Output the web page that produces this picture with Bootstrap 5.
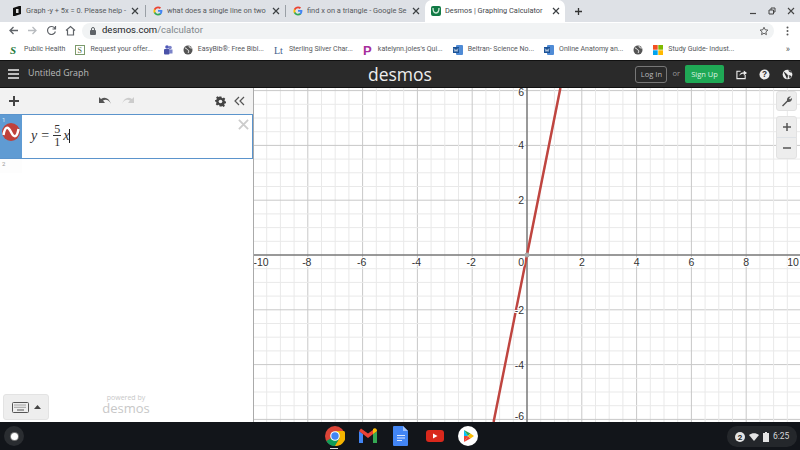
<!DOCTYPE html>
<html lang="en">
<head>
<meta charset="UTF-8">
<meta name="viewport" content="width=device-width, initial-scale=1.0">
<title>Desmos | Graphing Calculator</title>
<link rel="stylesheet" href="https://cdn.jsdelivr.net/npm/bootstrap@5.3.0/dist/css/bootstrap.min.css">
<style>
html, body { width: 800px; height: 450px; overflow: hidden; }
body { font-family: Roboto, "Liberation Sans", sans-serif; background: #fff; color: #3c4043; }
.tabstrip { height: 22px; background: #dee1e6; font-size: 7.4px; }
.chrome-tab { width: 139px; height: 22px; padding: 0 5px 0 7px; gap: 4px; color: #55585c; white-space: nowrap; flex: none; }
.chrome-tab.first-tab { width: 145px; padding: 0 6px 0 12px; }
.chrome-tab.active-tab { background: #fff; border-radius: 7px 7px 0 0; width: 140px; padding-left: 6px; color: #45484c; }
.tab-sep { width: 1px; height: 12px; background: #9aa0a6; flex: none; }
.tab-title { flex: 1; min-width: 0; overflow: hidden; }
.tab-x { width: 8px; flex: none; }
.new-tab { margin-left: 9px; }
.win-btns { gap: 11px; padding-right: 5px; }
.toolbar { height: 17px; background: #fff; padding-left: 4px; }
.toolbar-slot { width: 19px; }
.omni { width: 692px; height: 16px; margin-left: 2px; background: #f1f3f4; border-radius: 8px; padding: 0 5px 0 8px; font-size: 9.5px; color: #80868b; }
.omni b { font-weight: 400; color: #202124; }
.lock-ico { margin-right: 6px; }
.menu-dots { margin-left: 12px; }
.bookmarks { height: 21px; background: #fff; font-size: 7px; padding-left: 9px; color: #55585c; white-space: nowrap; }
.bm { gap: 5px; margin-right: 10px; flex: none; }
.bm-ico { width: 10px; height: 10px; flex: none; }
.more-bm { font-size: 9px; padding-right: 10px; }
.dm-header { height: 28px; background: #2a2a2a; border-top: 1px solid #111; border-bottom: 1px solid #111; color: #ddd; font-size: 8.8px; padding: 0 7px 0 8px; font-family: "Open Sans", "Liberation Sans", sans-serif; }
.dm-title { margin-left: 9px; color: #bbb; }
.dm-logo { position: absolute; left: 368px; top: 1px; font-size: 17.5px; line-height: 24px; color: #eee; }
.btn-login { border: 1px solid #777; border-radius: 3px; font-size: 7.5px; color: #bbb; padding: 0; width: 32px; height: 17px; line-height: 15px; background: transparent; }
.btn-signup { background: #1fa855; border: 0; border-radius: 2px; font-size: 7.5px; color: #d8f2e2; padding: 0; width: 39px; height: 18px; line-height: 18px; }
.dm-or { font-size: 7.5px; color: #999; margin: 0 5px; }
.dm-ico { margin-left: 12px; }
.main-area { height: 334px; }
.left-panel { width: 254px; height: 334px; background: #fff; border-right: 1px solid #aaa; position: relative; }
.panel-top { height: 26px; background: #f2f2f2; padding: 0 8px 0 9px; }
.undo-group { margin-left: 80px; gap: 9px; }
.expr-row { height: 45px; border: 1px solid #5b94cc; border-left: 0; background: #fff; }
.expr-tab { width: 22px; background: #5f9bd3; position: relative; flex: none; }
.expr-num { position: absolute; left: 2px; top: 1px; font-size: 6px; color: #dce9f5; line-height: 8px; }
.expr-ball { position: absolute; left: 2px; top: 8px; }
.expr-math { font-family: "Liberation Serif", serif; font-size: 14px; color: #333; margin: 0 0 2px 9px; gap: 4px; }
.expr-x { margin-left: -2px; }
.expr-close { position: absolute; right: 3px; top: 4px; }
.frac { font-size: 12px; line-height: 12px; text-align: center; }
.frac-top { border-bottom: 1px solid #333; padding: 0 1px; }
.caret-bar { width: 1px; height: 14px; background: #222; margin-left: -4px; }
.next-num { font-size: 6px; color: #999; padding: 1px 0 0 2px; line-height: 8px; width: 22px; height: 14px; background: #fdfdfd; }
.kbd-btn { position: absolute; left: 3px; top: 306px; width: 46px; height: 26px; background: #eeeeee; border: 1px solid #e3e3e3; border-radius: 3px; gap: 5px; }
.powered { position: absolute; left: 98px; top: 305px; width: 56px; text-align: center; color: #c8c8c8; font-family: "Open Sans", sans-serif; }
.powered-a { font-size: 7px; line-height: 9px; }
.powered-b { font-size: 13px; line-height: 13px; }
.graph-pane { width: 546px; height: 334px; position: relative; overflow: hidden; background: #fff; }
.graph-pane svg { display: block; }
.graph-text { font-family: "Liberation Sans", Arial, sans-serif; font-size: 10.5px; fill: #333; stroke: #fff; stroke-width: 2px; paint-order: stroke; }
.side-btn { position: absolute; left: 522px; width: 21px; background: #ededed; border: 1px solid #e2e2e2; border-radius: 3px; color: #555; }
.side-wrench { top: 3px; height: 20px; }
.side-zoom { top: 28px; height: 43px; }
.shelf { height: 28px; background: #12151a; position: relative; }
.launcher { position: absolute; left: 4px; top: 4px; width: 20px; height: 20px; border-radius: 50%; background: #2a2d31; }
.launcher span { width: 7px; height: 7px; border-radius: 50%; background: #fff; box-shadow: 0 0 0 1px #777; }
.shelf-apps { position: absolute; left: 325px; top: 4px; }
.shelf-app { width: 20px; height: 20px; margin-right: 13.2px; display: block; }
.shelf-mark { position: absolute; left: 330px; top: 26px; width: 8px; height: 1px; background: #ddd; }
.tray { position: absolute; left: 727px; top: 4px; width: 70px; height: 21px; border-radius: 10px; background: #24272b; color: #d6d8da; font-size: 8.5px; gap: 4px; padding-left: 8px; }
</style>
</head>
<body>
<div class="tabstrip d-flex align-items-center">
  <div class="chrome-tab first-tab d-flex align-items-center">
    <svg class="bm-ico" viewBox="0 0 10 10"><path d="M1 2 7 0h2v8L3 10H1z" fill="#111"/><rect x="4" y="3" width="2.5" height="4" fill="#ddd"/></svg>
    <span class="tab-title">Graph -y + 5x = 0. Please help -</span>
    <svg class="tab-x" viewBox="0 0 8 8"><path d="M1 1l6 6M7 1 1 7" stroke="#3c4043" stroke-width="1.200"/></svg>
  </div>
  <div class="tab-sep"></div>
  <div class="chrome-tab d-flex align-items-center">
    <svg class="bm-ico" viewBox="0 0 48 48"><path fill="#4285f4" d="M45 24c0-1.500-.1-3-.4-4.400H24v8.500h11.800c-.5 2.700-2 5-4.400 6.600v5.500h7.100C42.700 36 45 30.500 45 24z"/><path fill="#34a853" d="M24 46c5.900 0 10.900-2 14.500-5.300l-7.100-5.500c-2 1.300-4.500 2.100-7.400 2.100-5.700 0-10.500-3.800-12.200-9H4.500v5.700C8.100 41.100 15.500 46 24 46z"/><path fill="#fbbc05" d="M11.800 28.300c-.9-2.700-.9-5.600 0-8.600v-5.700H4.500c-3 6-3 14 0 20z"/><path fill="#ea4335" d="M24 10.700c3.200 0 6.100 1.100 8.400 3.300l6.300-6.300C34.900 4.200 29.900 2 24 2 15.500 2 8.100 6.900 4.500 14l7.300 5.700c1.700-5.200 6.500-9 12.200-9z"/></svg>
    <span class="tab-title">what does a single line on two</span>
    <svg class="tab-x" viewBox="0 0 8 8"><path d="M1 1l6 6M7 1 1 7" stroke="#3c4043" stroke-width="1.200"/></svg>
  </div>
  <div class="tab-sep"></div>
  <div class="chrome-tab d-flex align-items-center">
    <svg class="bm-ico" viewBox="0 0 48 48"><path fill="#4285f4" d="M45 24c0-1.500-.1-3-.4-4.400H24v8.500h11.800c-.5 2.700-2 5-4.400 6.600v5.500h7.100C42.700 36 45 30.500 45 24z"/><path fill="#34a853" d="M24 46c5.900 0 10.900-2 14.500-5.300l-7.100-5.500c-2 1.300-4.500 2.100-7.400 2.100-5.700 0-10.500-3.800-12.200-9H4.500v5.700C8.100 41.100 15.500 46 24 46z"/><path fill="#fbbc05" d="M11.800 28.300c-.9-2.700-.9-5.600 0-8.600v-5.700H4.500c-3 6-3 14 0 20z"/><path fill="#ea4335" d="M24 10.700c3.200 0 6.100 1.100 8.400 3.300l6.300-6.300C34.900 4.200 29.900 2 24 2 15.500 2 8.100 6.900 4.500 14l7.300 5.700c1.700-5.200 6.500-9 12.200-9z"/></svg>
    <span class="tab-title">find x on a triangle - Google Se</span>
    <svg class="tab-x" viewBox="0 0 8 8"><path d="M1 1l6 6M7 1 1 7" stroke="#3c4043" stroke-width="1.200"/></svg>
  </div>
  <div class="chrome-tab active-tab d-flex align-items-center">
    <svg class="bm-ico" viewBox="0 0 10 10"><rect width="10" height="10" rx="2" fill="#127a45"/><path d="M2 2c0 4 1.500 5 3 5s3-1 3-5" fill="none" stroke="#cfe9d9" stroke-width="1.300"/></svg>
    <span class="tab-title">Desmos | Graphing Calculator</span>
    <svg class="tab-x" viewBox="0 0 8 8"><path d="M1 1l6 6M7 1 1 7" stroke="#3c4043" stroke-width="1.200"/></svg>
  </div>
  <svg class="new-tab" width="9" height="9" viewBox="0 0 9 9"><path d="M4.500 1v7M1 4.500h7" stroke="#333" stroke-width="1.300"/></svg>
  <div class="ms-auto d-flex align-items-center win-btns">
    <svg width="8" height="8" viewBox="0 0 8 8"><path d="M1 6.500h6" stroke="#444" stroke-width="1.200"/></svg>
    <svg width="8" height="8" viewBox="0 0 8 8"><path d="M1 3h4.500v4H1zM3 3V1h4v4H5.500" fill="none" stroke="#444" stroke-width="1"/></svg>
    <svg width="8" height="8" viewBox="0 0 8 8"><path d="M1 1l6 6M7 1 1 7" stroke="#444" stroke-width="1.100"/></svg>
  </div>
</div>

<div class="toolbar d-flex align-items-center">
  <span class="toolbar-slot d-flex justify-content-center"><svg width="11" height="11" viewBox="0 0 11 11"><path d="M10 5.500H2M5.500 2 2 5.500 5.500 9" fill="none" stroke="#5f6368" stroke-width="1.300"/></svg></span>
  <span class="toolbar-slot d-flex justify-content-center"><svg width="11" height="11" viewBox="0 0 11 11"><path d="M1 5.500h8M5.500 2 9 5.500 5.500 9" fill="none" stroke="#b8bbbf" stroke-width="1.300"/></svg></span>
  <span class="toolbar-slot d-flex justify-content-center"><svg width="11" height="11" viewBox="0 0 11 11"><path d="M9 3.500A4 4 0 1 0 9.400 6.500M9.500 1v3h-3" fill="none" stroke="#5f6368" stroke-width="1.200"/></svg></span>
  <span class="toolbar-slot d-flex justify-content-center"><svg width="11" height="11" viewBox="0 0 11 11"><path d="M1 5.500 5.500 1.500 10 5.500M2.500 5v5h6V5" fill="none" stroke="#5f6368" stroke-width="1.200"/></svg></span>
  <div class="omni d-flex align-items-center">
    <svg class="lock-ico" width="6" height="8" viewBox="0 0 6 8"><rect y="3" width="6" height="5" rx="1" fill="#5f6368"/><path d="M1.500 3V2a1.500 1.500 0 0 1 3 0v1" fill="none" stroke="#5f6368"/></svg>
    <span><b>desmos.com</b>/calculator</span>
    <svg class="ms-auto" width="10" height="10" viewBox="0 0 24 24"><path d="m12 3 2.800 6 6.500.8-4.800 4.400 1.300 6.500L12 17.400l-5.800 3.300 1.300-6.500L2.700 9.800 9.200 9z" fill="none" stroke="#444" stroke-width="2"/></svg>
  </div>
  <svg class="menu-dots" width="3" height="10" viewBox="0 0 3 10"><circle cx="1.500" cy="1.500" r="1" fill="#555"/><circle cx="1.500" cy="5" r="1" fill="#555"/><circle cx="1.500" cy="8.500" r="1" fill="#555"/></svg>
</div>

<div class="bookmarks d-flex align-items-center">
  <div class="bm d-flex align-items-center"><svg class="bm-ico" viewBox="0 0 10 10"><text x="1" y="9" font-size="11" font-weight="700" font-style="italic" font-family="Liberation Serif" fill="#1f7a3c">S</text></svg><span>Public Health</span></div>
  <div class="bm d-flex align-items-center"><svg class="bm-ico" viewBox="0 0 10 10"><rect x=".5" y=".5" width="9" height="9" fill="#fff" stroke="#7b9a6c"/><text x="2.500" y="8" font-size="8" font-family="Liberation Serif" fill="#4a6a3c">S</text></svg><span>Request your offer...</span></div>
  <div class="bm d-flex align-items-center"><svg class="bm-ico" viewBox="0 0 10 10"><circle cx="7" cy="2.500" r="1.800" fill="#7b83c9"/><circle cx="4" cy="2" r="1.800" fill="#5059b8"/><rect x="1" y="4" width="5.500" height="5.500" rx="1" fill="#4a52a8"/><rect x="6" y="4.500" width="3.500" height="4" fill="#7b83c9"/></svg></div>
  <div class="bm d-flex align-items-center"><svg class="bm-ico" viewBox="0 0 10 10"><circle cx="5" cy="5" r="4.500" fill="#555"/><path d="M2 3c2 0 2 2 3 2s1 2 0 3M6 1c0 2 2 2 3 2" fill="none" stroke="#eee"/></svg><span>EasyBib®: Free Bibl...</span></div>
  <div class="bm d-flex align-items-center"><svg class="bm-ico" viewBox="0 0 10 10"><text x="0" y="9" font-size="10" font-family="Liberation Serif" fill="#44608c">Lt</text></svg><span>Sterling Silver Char...</span></div>
  <div class="bm d-flex align-items-center"><svg class="bm-ico" viewBox="0 0 10 10"><text x="0" y="9.500" font-size="13" font-weight="700" font-family="Liberation Sans" fill="#a72f9d">P</text></svg><span>katelynn.joles's Qui...</span></div>
  <div class="bm d-flex align-items-center"><svg class="bm-ico" viewBox="0 0 10 10"><rect x="3" y="0" width="7" height="10" rx="1" fill="#4f8bd6"/><rect x="0" y="2" width="6" height="6" fill="#1b5296"/><path d="M1 3.500 2 6.500 3 4.500 4 6.500 5 3.500" fill="none" stroke="#fff" stroke-width=".6"/></svg><span>Beltran- Science No...</span></div>
  <div class="bm d-flex align-items-center"><svg class="bm-ico" viewBox="0 0 10 10"><rect x="3" y="0" width="7" height="10" rx="1" fill="#4f8bd6"/><rect x="0" y="2" width="6" height="6" fill="#1b5296"/><path d="M1 3.500 2 6.500 3 4.500 4 6.500 5 3.500" fill="none" stroke="#fff" stroke-width=".6"/></svg><span>Online Anatomy an...</span></div>
  <div class="bm d-flex align-items-center"><svg class="bm-ico" viewBox="0 0 10 10"><circle cx="5" cy="5" r="4.500" fill="#555"/><path d="M2 3c2 0 2 2 3 2s1 2 0 3M6 1c0 2 2 2 3 2" fill="none" stroke="#eee"/></svg></div>
  <div class="bm d-flex align-items-center"><svg class="bm-ico" viewBox="0 0 10 10"><rect width="4.700" height="4.700" fill="#f25022"/><rect x="5.300" width="4.700" height="4.700" fill="#7fba00"/><rect y="5.300" width="4.700" height="4.700" fill="#00a4ef"/><rect x="5.300" y="5.300" width="4.700" height="4.700" fill="#ffb900"/></svg><span>Study Guide- Indust...</span></div>
  <span class="ms-auto more-bm">»</span>
</div>

<div class="dm-header d-flex align-items-center position-relative">
  <svg width="11" height="10" viewBox="0 0 11 10"><path d="M0 1h11M0 5h11M0 9h11" stroke="#eee" stroke-width="1.500"/></svg>
  <span class="dm-title">Untitled Graph</span>
  <span class="dm-logo">desmos</span>
  <div class="ms-auto d-flex align-items-center">
    <button class="btn-login" type="button">Log In</button>
    <span class="dm-or">or</span>
    <button class="btn-signup" type="button">Sign Up</button>
    <svg class="dm-ico" width="11" height="11" viewBox="0 0 12 11"><path d="M5 2H1v8h9V6" fill="none" stroke="#eee" stroke-width="1.200"/><path d="M3.500 7c.5-3 3-4 5-4V1L12 3.800 8.500 6.500V4.800C6.500 4.800 5 5.500 3.500 7z" fill="#eee"/></svg>
    <svg class="dm-ico" width="11" height="11" viewBox="0 0 12 12"><circle cx="6" cy="6" r="5.500" fill="#eee"/><text x="6" y="9" text-anchor="middle" font-size="9" font-weight="700" font-family="Liberation Sans" fill="#2a2a2a">?</text></svg>
    <svg class="dm-ico" width="11" height="11" viewBox="0 0 12 12"><circle cx="6" cy="6" r="5.300" fill="#eee"/><path d="M2 3.500c2 0 2 2 3.500 2.500s.5 3 0 4.500M7.500 1c-.5 2 1.500 2.500 3.500 2.500M8 7l2 1-1.500 2z" fill="#2a2a2a" stroke="#2a2a2a" stroke-width=".6"/></svg>
  </div>
</div>

<div class="main-area d-flex">
  <div class="left-panel">
    <div class="panel-top d-flex align-items-center">
      <svg width="10" height="10" viewBox="0 0 10 10"><path d="M5 0v10M0 5h10" stroke="#444" stroke-width="2"/></svg>
      <div class="d-flex undo-group">
        <svg width="13" height="8" viewBox="0 0 13 8"><path d="M12 7C10 3 7 2 4 3.500L6 6H0V0l2 2c4-2.500 8-1 10 5z" fill="#555"/></svg>
        <svg width="13" height="8" viewBox="0 0 13 8"><path d="M1 7C3 3 6 2 9 3.500L7 6h6V0l-2 2C7-.5 3 1 1 7z" fill="#ccc"/></svg>
      </div>
      <svg class="ms-auto" width="11" height="11" viewBox="0 0 24 24"><path d="M10 1h4l.6 3 2.200 1 2.700-1.600 2.800 2.800L20.700 9l1 2.200 2.300.6v4l-3 .6-1 2.200 1.600 2.700-2.800 2.800L16 22l-2 1h-4l-.6-3-2.200-1-2.700 1.600-2.800-2.800L3.300 15l-1-2.200L0 12V9l3-.6 1-2.200L2.400 3.500 5.200.7 8 2.300z" fill="#444"/><circle cx="12" cy="12" r="4" fill="#f2f2f2"/></svg>
      <svg class="ms-2" width="11" height="10" viewBox="0 0 11 10"><path d="M5 1 1 5l4 4M10 1 6 5l4 4" fill="none" stroke="#555" stroke-width="1.200"/></svg>
    </div>
    <div class="expr-row d-flex position-relative">
      <div class="expr-tab">
        <span class="expr-num">1</span>
        <svg class="expr-ball" width="18" height="18" viewBox="0 0 18 18"><circle cx="9" cy="9" r="9" fill="#c0413b"/><path d="M1.500 12C3 3 6 3 9 9s6 6 7.500-3" fill="none" stroke="#fff" stroke-width="2.500"/></svg>
      </div>
      <div class="expr-math d-flex align-items-center">
        <i>y</i><span>=</span>
        <span class="frac d-inline-block"><span class="frac-top d-block">5</span><span class="d-block">1</span></span>
        <i class="expr-x">x</i><span class="caret-bar"></span>
      </div>
      <svg class="expr-close" width="11" height="11" viewBox="0 0 12 12"><path d="M1 1l10 10M11 1 1 11" stroke="#ccc" stroke-width="2"/></svg>
    </div>
    <div class="next-num">2</div>
    <div class="kbd-btn d-flex align-items-center justify-content-center">
      <svg width="17" height="11" viewBox="0 0 17 11"><rect x=".5" y=".5" width="16" height="10" rx="1" fill="none" stroke="#555"/><path d="M2.500 3h12M2.500 5.300h12" stroke="#555" stroke-dasharray="1 1"/><path d="M5 8h7" stroke="#555"/></svg>
      <svg width="7" height="4" viewBox="0 0 7 4"><path d="M3.500 0 7 4H0z" fill="#444"/></svg>
    </div>
    <div class="powered"><div class="powered-a">powered by</div><div class="powered-b">desmos</div></div>
  </div>
  <div class="graph-pane" id="graph">
    <div class="side-btn side-wrench d-flex align-items-center justify-content-center">
      <svg width="12" height="12" viewBox="0 0 12 12"><path d="M1 10.500 6 5.500C5.500 3 7.500 1 10 1.500L8 3.500l1 1L11 3c.5 2.500-2 4.500-4.500 4L2 11.500z" fill="#555"/></svg>
    </div>
    <div class="side-btn side-zoom d-flex flex-column">
      <span class="flex-fill d-flex align-items-center justify-content-center border-bottom"><svg width="8" height="8" viewBox="0 0 8 8"><path d="M4 0v8M0 4h8" stroke="#555" stroke-width="1.500"/></svg></span>
      <span class="flex-fill d-flex align-items-center justify-content-center"><svg width="8" height="8" viewBox="0 0 8 8"><path d="M0 4h8" stroke="#555" stroke-width="1.500"/></svg></span>
    </div>
  </div>
</div>

<div class="shelf">
  <div class="launcher d-flex align-items-center justify-content-center"><span></span></div>
  <div class="shelf-apps d-flex align-items-center">
    <svg class="shelf-app" viewBox="0 0 20 20"><circle cx="10" cy="10" r="10" fill="#db4437"/><path d="M10 10 1.300 15A10 10 0 0 0 10 20l5-8z" fill="#0f9d58"/><path d="M10 5h9.200A10 10 0 0 1 10 20l4.500-7.500z" fill="#f4b400"/><circle cx="10" cy="10" r="4.800" fill="#fff"/><circle cx="10" cy="10" r="3.700" fill="#4285f4"/></svg>
    <svg class="shelf-app" viewBox="0 0 20 20"><path d="M1 5v12h4V8z" fill="#4285f4"/><path d="M15 8v9h4V5z" fill="#34a853"/><path d="M1 5l9 7 9-7-2-2.500L10 7.500 3 2.500z" fill="#ea4335"/><path d="M15 8l4-3c0-2.500-2-3.500-4-2z" fill="#fbbc04"/></svg>
    <svg class="shelf-app" viewBox="0 0 20 20"><path d="M3 0h9l5 5v14a1 1 0 0 1-1 1H3a1 1 0 0 1-1-1V1a1 1 0 0 1 1-1z" fill="#4285f4"/><path d="M12 0l5 5h-5z" fill="#a1c2fa"/><path d="M6 9h8v1H6zM6 11.500h8v1H6zM6 14h5v1H6z" fill="#dce8fd"/></svg>
    <svg class="shelf-app" viewBox="0 0 20 20"><rect x="1" y="4" width="18" height="12" rx="3" fill="#d9281c"/><path d="M8 7.500v5l4.500-2.500z" fill="#fff"/></svg>
    <svg class="shelf-app" viewBox="0 0 20 20"><circle cx="10" cy="10" r="10" fill="#fff"/><path d="M6 4v6l4 0z" fill="#00c3ff"/><path d="M6 16v-6h4z" fill="#ea4335"/><path d="M6 4l4 6 2.500-2.500z" fill="#34a853"/><path d="M6 16l4-6 2.500 2.500z" fill="#ea4335"/><path d="M12.500 7.500 16 10l-3.500 2.500L10 10z" fill="#fbbc04"/></svg>
  </div>
  <div class="shelf-mark"></div>
  <div class="tray d-flex align-items-center">
    <svg width="10" height="10" viewBox="0 0 10 10"><circle cx="5" cy="5" r="5" fill="#e4e4e4"/><text x="5" y="7.800" text-anchor="middle" font-size="8" font-weight="700" font-family="Roboto" fill="#222">2</text></svg>
    <svg width="10" height="8" viewBox="0 0 10 8"><path d="M0 2C3-.5 7-.5 10 2L5 8z" fill="#e4e4e4"/></svg>
    <svg width="6" height="10" viewBox="0 0 6 10"><path d="M2 0h2v1h2v9H0V1h2z" fill="#e4e4e4"/></svg>
    <span>6:25</span>
  </div>
</div>

<script>
  // graph paper: origin and scale read off the picture
  const W = 546, H = 334, ox = 273, oy = 167, unit = 27.4;
  let s = "";
  for (let i = -22; i <= 22; i++) {
    const x = ox + i * unit / 2, y = oy + i * unit / 2;
    const major = i % 4 === 0;
    const col = major ? "#c8c8c8" : "#e9e9e9";
    if (i !== 0) {
      s += `<line x1="${x}" y1="0" x2="${x}" y2="${H}" stroke="${col}" stroke-width="1"/>`;
      s += `<line x1="0" y1="${y}" x2="${W}" y2="${y}" stroke="${col}" stroke-width="1"/>`;
    }
  }
  s += `<line x1="${ox}" y1="0" x2="${ox}" y2="${H}" stroke="#777" stroke-width="1.500"/>`;
  s += `<line x1="0" y1="${oy}" x2="${W}" y2="${oy}" stroke="#777" stroke-width="1.500"/>`;
  const x1 = ox + (oy / unit / 5) * unit, x2 = ox - ((H - oy) / unit / 5) * unit;
  s += `<line x1="${x1}" y1="0" x2="${x2}" y2="${H}" stroke="#bf4540" stroke-width="2.500"/>`;
  s += `<circle cx="${ox}" cy="${oy}" r="2.500" fill="#aaa"/>`;
  for (let n = -10; n <= 10; n += 2) {
    if (n === 0) continue;
    // end labels get pushed inside the pane, same as desmos does
    const x = Math.min(Math.max(ox + n * unit - (n < 0 ? 1 : 0), 7), W - 7);
    s += `<text class="graph-text" x="${x}" y="${oy + 11}" text-anchor="middle">${n}</text>`;
  }
  for (let n = -6; n <= 6; n += 2) {
    if (n === 0) continue;
    const y = Math.min(Math.max(oy - n * unit + 4, 8), H - 2);
    s += `<text class="graph-text" x="${ox - 3}" y="${y}" text-anchor="end">${n}</text>`;
  }
  s += `<text class="graph-text" x="${ox - 3}" y="${oy + 11}" text-anchor="end">0</text>`;
  document.getElementById("graph").insertAdjacentHTML("afterbegin", `<svg width="${W}" height="${H}">${s}</svg>`);
</script>
<script src="https://cdn.jsdelivr.net/npm/bootstrap@5.3.0/dist/js/bootstrap.bundle.min.js"></script>
</body>
</html>
